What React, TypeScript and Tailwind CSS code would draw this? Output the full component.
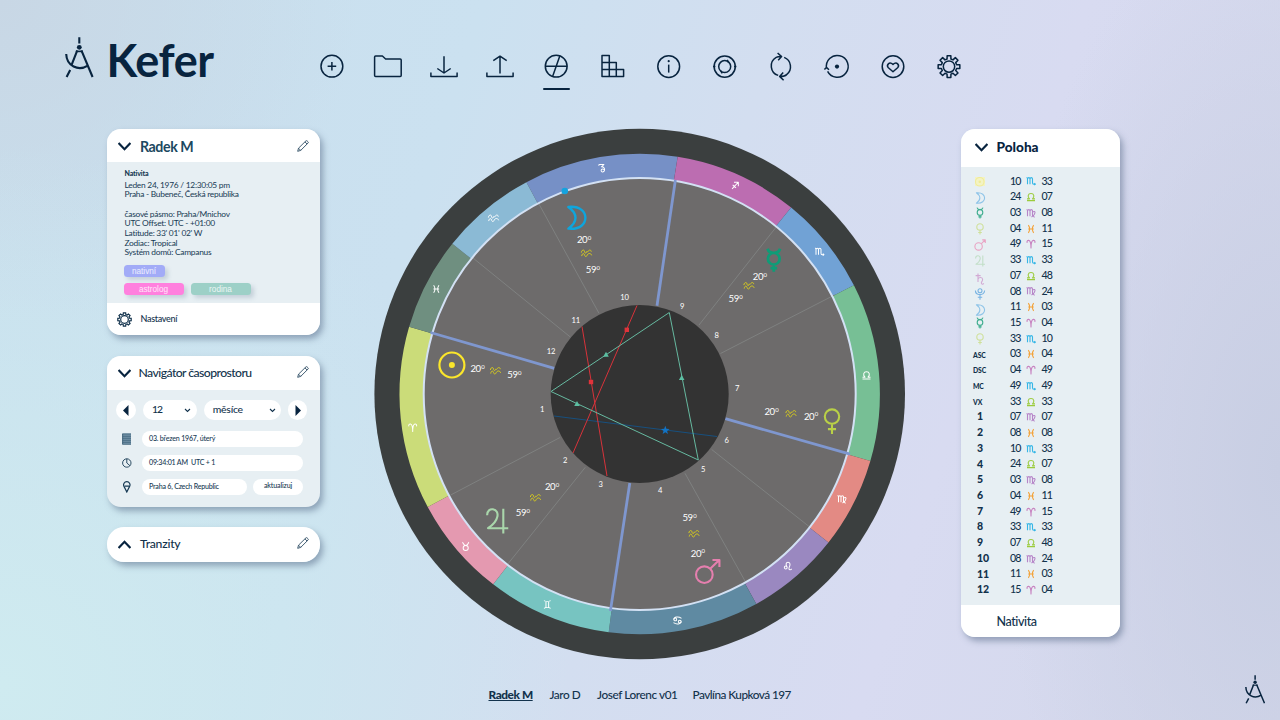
import type { ReactNode } from "react";

const CX = 639.7;
const CY = 394;

const wave = "M.4 5C.8 1.6 3.6 1.6 3.8 3.6S5.4 6.4 6 4.4 6.6 5.6 7.6 3.8 10.8 1.4 11.2 4";
const wave2 = "M.8 8.8C1.2 5.4 3.4 5.6 3.8 7.4S5.6 10.4 6.6 8 10.6 5 11.6 8";
const mStem = "M.6 2.2Q1.8 1.8 1.8 3.5V9.8M1.8 3.5Q2.2 2 3.4 2T4.8 3.5V9.8M4.8 3.5Q5.2 2 6.4 2T7.8 3.5";

const glyphs: Record<string, ReactNode> = {
  aries: <path d="M1.4 4.6C.8 2.6 2 1.5 3.3 1.7 5.2 2 6 5 6 10.8 6 5 6.8 2 8.7 1.7 10 1.5 11.2 2.6 10.6 4.6" />,
  taurus: <path d="M2 1C3.2 1.4 3.2 4.8 6 4.8S8.8 1.4 10 1M6 4.8A3 3 0 1 0 6 10.9 3 3 0 1 0 6 4.8" />,
  gemini: <path d="M2 1.4C4 2.6 8 2.6 10 1.4M2 10.6C4 9.4 8 9.4 10 10.6M4.4 2.2V9.8M7.6 2.2V9.8" />,
  cancer: (
    <>
      <circle cx="3.3" cy="4.7" r="1.7" />
      <circle cx="8.7" cy="7.3" r="1.7" />
      <path d="M1.6 4.7C1.8 1.6 7 .8 10.8 3.4M10.4 7.3C10.2 10.4 5 11.2 1.2 8.6" />
    </>
  ),
  leo: (
    <>
      <circle cx="3.3" cy="7.8" r="1.7" />
      <path d="M4.6 6.8C3.2 4.4 3.4 1.4 6 1.4S8.8 4.2 8 6.2 6.4 10.4 8.2 10.6 9.8 10 10.6 9.4" />
    </>
  ),
  virgo: <path d={mStem + "V8Q7.8 10 10.4 11M7.8 4.8Q10.8 3.2 10.8 5.8 10.6 8.6 6.6 10.8"} />,
  libra: <path d="M1.2 10.4H10.8M1.2 8.2H4.2C1.4 5.6 2.4 1.8 6 1.8S10.6 5.6 7.8 8.2H10.8" />,
  scorpio: <path d={mStem + "V8Q7.8 9.8 9.2 9.8H11.2M10 8.6L11.3 9.8 10 11"} />,
  sagittarius: <path d="M2.5 10.2L9.6 2.6M4.8 2.2H10V7M3.2 5.4L7.2 9" />,
  capricorn: <path d="M2.4 3.4Q2.4 1.4 4 1.8H8.6L5.6 4.6C8.8 4.6 9.8 6.8 9.2 9 8.4 11.4 5 11.2 5.2 8.8S8.4 6.6 9.2 8.6" />,
  aquarius: <path d={wave + wave2} />,
  pisces: <path d="M2.8 1.4Q6 6 2.8 10.6M9.2 1.4Q6 6 9.2 10.6M2.6 6H9.4" />,
  sun: (
    <>
      <circle cx="6" cy="6" r="5.4" />
      <circle cx="6" cy="6" r=".9" fill="currentColor" />
    </>
  ),
  moon: <path d="M2.4 .8C8.4 .2 10.6 3.4 10.6 6S8.4 11.8 2.4 11.2C7 8 7 4 2.4 .8Z" />,
  mercury: <path d="M3 .6Q3.6 2.6 6 2.6T9 .6M6 2.6A2.8 2.8 0 1 0 6 8.2 2.8 2.8 0 1 0 6 2.6M6 8.2V11.6M4.4 9.9H7.6" />,
  venus: <path d="M6 .7A3.2 3.2 0 1 0 6 7.1 3.2 3.2 0 1 0 6 .7M6 7.1V11.6M4.2 9.5H7.8" />,
  mars: <path d="M4.6 3.7A3.7 3.7 0 1 0 4.6 11.1 3.7 3.7 0 1 0 4.6 3.7M7.2 4.8L11.2 .9M8.2 .9H11.3V4" />,
  jupiter: <path d="M1.6 3.4C1.6 1.4 3 .6 4.2 .8 7.4 1.4 7 6 2 9.2H11M8.8 .6V11.6" />,
  saturn: <path d="M1.6 2.6H6.6M4 .6V9M4 6C5 4 8.6 4 8.6 6.4S7 8.6 7.4 10.2 9.2 11.2 9.8 10.4" />,
  pluto: (
    <>
      <circle cx="6" cy="2.7" r="2" />
      <path d="M1.4 2.6C1.4 8 10.6 8 10.6 2.6M6 6.6V11.8M3.8 9.2H8.2" />
    </>
  ),
};

function Glyph({ name, x, y, size, color, sw = 1 }: { name: string; x: number; y: number; size: number; color: string; sw?: number }) {
  const k = size / 12;
  return (
    <g
      transform={`translate(${x - size / 2} ${y - size / 2}) scale(${k})`}
      fill="none"
      stroke={color}
      color={color}
      strokeWidth={sw / k}
      strokeLinejoin="round"
    >
      {glyphs[name]}
    </g>
  );
}

function GlyphIcon({ name, color, size = 11, sw = 1 }: { name: string; color: string; size?: number; sw?: number }) {
  return (
    <svg width={size} height={size} viewBox={`0 0 ${size} ${size}`} className="shrink-0 overflow-visible">
      <Glyph name={name} x={size / 2} y={size / 2} size={size} color={color} sw={sw} />
    </svg>
  );
}

/* Sign boundaries on the outer edge of the zodiac ring, clockwise from Capricorn. */
const signs = [
  { name: "capricorn", color: "#7690c6", from: [526.7, 182.7], at: [601.8, 168] },
  { name: "sagittarius", color: "#bc6db1", from: [677.7, 156.7], at: [735, 185.3] },
  { name: "scorpio", color: "#71a2d5", from: [791, 207.7], at: [819.5, 251.5] },
  { name: "libra", color: "#77bf95", from: [854, 285.3], at: [866.5, 375.3] },
  { name: "virgo", color: "#e38a84", from: [870, 461], at: [842, 499] },
  { name: "leo", color: "#9a88c0", from: [827.7, 542], at: [788, 566] },
  { name: "cancer", color: "#5f8aa2", from: [756.3, 604], at: [677.5, 620.5] },
  { name: "gemini", color: "#77c4c1", from: [608.7, 632.3], at: [547.3, 604.5] },
  { name: "taurus", color: "#e499b0", from: [494, 583.3], at: [465.7, 546.5] },
  { name: "aries", color: "#cbdc79", from: [428.3, 506.7], at: [412.7, 427.5] },
  { name: "pisces", color: "#6f8f80", from: [409.3, 326.7], at: [436.3, 289] },
  { name: "aquarius", color: "#8bbad5", from: [452.7, 244], at: [493.5, 218.5] },
];

function sector(a: number[], b: number[]) {
  const t0 = Math.atan2(a[1] - CY, a[0] - CX);
  const t1 = Math.atan2(b[1] - CY, b[0] - CX);
  const p = (r: number, t: number) => `${(CX + r * Math.cos(t)).toFixed(2)} ${(CY + r * Math.sin(t)).toFixed(2)}`;
  return `M${p(240.2, t0)}A240.2 240.2 0 0 1 ${p(240.2, t1)}L${p(216, t1)}A216 216 0 0 0 ${p(216, t0)}Z`;
}

const cusps = [
  [537.7, 201.7, 599, 313.3], [473, 258, 570.3, 337], [450.7, 495, 560, 437.5], [507, 565, 585.3, 467.3],
  [746.3, 583.3, 685, 473.3], [809.3, 526.7, 711.7, 449.5], [834.5, 295, 720.5, 353.5], [777, 226, 699, 325],
];
const axes = [
  [430.5, 332.5, 554.3, 368.3], [675.4, 180, 657, 305.8], [850, 454.2, 725.3, 418.7], [610.4, 611, 629.8, 483],
];
const houses: [string, number, number][] = [
  ["10", 624.5, 300], ["9", 682, 309], ["8", 716.7, 338], ["7", 737, 391], ["6", 726.5, 443], ["5", 703, 472],
  ["4", 660, 493], ["3", 600.5, 487], ["2", 565, 463], ["1", 542, 412], ["12", 551, 354], ["11", 575.7, 323],
];
const degrees: [string, number, number][] = [
  ["20", 577, 243], ["59", 585.8, 273], ["20", 470.5, 372], ["59", 507.3, 378], ["20", 752.8, 279.7], ["59", 728.6, 302],
  ["20", 764.5, 415], ["20", 804, 419.5], ["20", 545, 490], ["59", 515.8, 516], ["59", 682.5, 521], ["20", 690.8, 556.5],
];
const waves = [[586.5, 253.5], [495.5, 371], [749, 286], [791, 414], [535.5, 498], [694, 534]];

function Wheel() {
  return (
    <svg width="532" height="532" viewBox="374 128 532 532" className="shrink-0">
      <circle cx={CX} cy={CY} r="265.3" fill="#3b3f3f" />
      <circle cx={CX} cy={CY} r="217" fill="#6d6b6b" />
      {signs.map((s, i) => (
        <path key={s.name} d={sector(s.from, signs[(i + 1) % 12].from)} fill={s.color} />
      ))}
      {cusps.map((c, i) => (
        <line key={i} x1={c[0]} y1={c[1]} x2={c[2]} y2={c[3]} stroke="#7f8180" strokeWidth="1" />
      ))}
      <circle cx={CX} cy={CY} r="216" fill="none" stroke="#d3e1f4" strokeWidth="2" />
      {axes.map((c, i) => (
        <line key={i} x1={c[0]} y1={c[1]} x2={c[2]} y2={c[3]} stroke="#7f97cf" strokeWidth="2.8" />
      ))}
      <circle cx={CX} cy={CY} r="89" fill="#333333" />
      <g fill="none" strokeWidth="1">
        <path d="M554 416L717 436.5" stroke="#17507f" />
        <path d="M582 326.5L607 476M637 305.5L573 453" stroke="#d8323a" />
        <path d="M551 391.5L669.3 312.5L698.3 460Z" stroke="#66b9a0" />
      </g>
      <g fill="#e0333b">
        <rect x="588.8" y="379.8" width="4.4" height="4.4" />
        <rect x="624.6" y="327.6" width="4.4" height="4.4" />
      </g>
      <path d="M606 351.8l2.8 5h-5.6zM681.7 375l2.8 5h-5.6zM577 401l2.8 5h-5.6z" fill="#5cbfa2" />
      <path d="M665.3 425.8l1.1 3 3.2.1-2.5 2 .9 3.1-2.7-1.8-2.7 1.8.9-3.1-2.5-2 3.2-.1z" fill="#1273c4" />
      <circle cx="564.8" cy="191" r="3.3" fill="#14a3df" />
      {signs.map((s) => (
        <Glyph key={s.name} name={s.name} x={s.at[0]} y={s.at[1]} size={s.name === "aquarius" ? 11 : 10} color="#fff" sw={1} />
      ))}
      {waves.map((w, i) => (
        <Glyph key={i} name="aquarius" x={w[0]} y={w[1]} size={11} color="#d8cc1e" sw={1} />
      ))}
      <Glyph name="moon" x={575.8} y={217.8} size={25} color="#0fa5dc" sw={2.4} />
      <Glyph name="mercury" x={773.8} y={260} size={25} color="#0f9c77" sw={2.8} />
      <Glyph name="venus" x={832} y={421.3} size={27} color="#b9d047" sw={2.1} />
      <Glyph name="mars" x={707.5} y={571.5} size={27} color="#e57fae" sw={2.1} />
      <Glyph name="jupiter" x={497} y={521} size={27} color="#a9d6ab" sw={2.1} />
      <circle cx="451.9" cy="365" r="12.5" fill="none" stroke="#fbe62b" strokeWidth="2.2" />
      <circle cx="451.9" cy="365" r="3" fill="#fbe62b" />
      <g fill="#fff" fontFamily="Lato, sans-serif" fontSize="7.6" fontWeight="400" textAnchor="middle" letterSpacing="-.2">
        {houses.map(([t, x, y]) => (
          <text key={t} x={x} y={y}>{t}</text>
        ))}
      </g>
      <g fill="#fff" fontFamily="Lato, sans-serif" fontSize="9.6" fontWeight="400" letterSpacing="-.45">
        {degrees.map(([t, x, y], i) => (
          <text key={i} x={x} y={y}>
            {t}
            <tspan fontSize="6" dx=".5" dy="-3.2">0</tspan>
          </text>
        ))}
      </g>
    </svg>
  );
}

function Compass({ w, h }: { w: number; h: number }) {
  return (
    <svg width={w} height={h} viewBox="0 0 29 41" fill="none" stroke="#08243f" strokeWidth="2.1">
      <path d="M14.3 .3V6.6M12.3 13.4L6.8 27.4M5.2 33L1.6 40M16.4 13.4L27.6 40M1.2 17C1.6 29 13.4 34.6 22.8 28.6" />
      <circle cx="14.3" cy="10.3" r="2.4" fill="#08243f" stroke="none" />
      <path d="M10.8 14.4H17.8" strokeWidth="1.6" />
    </svg>
  );
}

function gearPath(cx: number, cy: number, ro: number, ri: number) {
  const pts: string[] = [];
  for (let i = 0; i < 8; i++) {
    const a = (i * Math.PI) / 4 - Math.PI / 2;
    [[-0.25, ri], [-0.17, ro], [0.17, ro], [0.25, ri]].forEach(([d, r]) => {
      pts.push(`${(cx + r * Math.cos(a + d)).toFixed(2)} ${(cy + r * Math.sin(a + d)).toFixed(2)}`);
    });
  }
  return `M${pts.join("L")}Z`;
}

/* Toolbar drawings share a 28 by 28 box. */
const toolIcons: { id: string; art: ReactNode }[] = [
  { id: "add", art: <><circle cx="13.9" cy="13.2" r="10.9" /><path d="M13.9 8.9V17.5M9.6 13.2H18.2" /></> },
  { id: "open", art: <path d="M.6 22.6V4Q.6 3 1.6 3H8.4L11.6 6H26.2Q27.2 6 27.2 7V22.6Q27.2 23.6 26.2 23.6H1.6Q.6 23.6 .6 22.6Z" /> },
  { id: "download", art: <path d="M14 3.2V20M7.3 15.5L14 20L20.7 15.5M.9 19.6V23.6H27.1V19.6" /> },
  { id: "upload", art: <path d="M14 20.4V3.2M7.3 7.7L14 3.2L20.7 7.7M.9 19.6V23.6H27.1V19.6" /> },
  { id: "chart", art: <><circle cx="14.2" cy="13.2" r="10.9" /><path d="M3.2 13.2H25.2M17.8 3L10.6 23.4" /></> },
  { id: "table", art: <path d="M3 2.6H10.3V23.6H3ZM3 9.6H17.3V23.6M3 16.6H24.6V23.6H3" /> },
  { id: "info", art: <><circle cx="13.7" cy="13.6" r="10.9" /><path d="M13.7 11.6V19.6" /><circle cx="13.7" cy="8.2" r="1.1" fill="#08243f" stroke="none" /></> },
  { id: "transit", art: <><circle cx="13.7" cy="13.6" r="10.6" /><circle cx="13.7" cy="13.6" r="6" /><path d="M2 13.6H4.4M23 13.6H25.4M16.2 6.9L17.6 9.4M11.2 20.3L9.8 17.8" /></> },
  { id: "cycle", art: <path d="M11.2 22.4A9.9 9.9 0 0 1 9.2 4.4Q10.6 3.6 14.2 3.6M10.6 0L14.6 3.6 11.2 7.2M17.2 4.4A10 10 0 0 1 19.6 21.6Q17.8 23.4 13.2 23.4M16.2 19.6L12.6 23.4 16.6 27.2" /> },
  { id: "return", art: <><path d="M3.6 15.6A10.9 10.9 0 1 1 4.6 18.4M1.4 16.6L3.4 14.4 6 16.8" /><circle cx="14" cy="13.6" r="2.1" fill="#08243f" stroke="none" /></> },
  { id: "partner", art: <><circle cx="14" cy="13.6" r="10.8" /><path d="M14 18.8L9.4 14.8C7 12.2 10.2 8 14 11.4 17.8 8 21 12.2 18.6 14.8Z" /></> },
  { id: "settings", art: <><path d={gearPath(14, 13.6, 11, 7.8)} /><circle cx="14" cy="13.6" r="5.7" /></> },
];

function Chevron({ up = false }: { up?: boolean }) {
  return (
    <svg width="13" height="9" viewBox="0 0 13 9" fill="none" stroke="#08243f" strokeWidth="2.1" className="shrink-0">
      <path d={up ? "M.6 8L6.5 1.8L12.4 8" : "M.6 1L6.5 7.2L12.4 1"} />
    </svg>
  );
}

function SmallChevron() {
  return (
    <svg width="7" height="5" viewBox="0 0 7 5" fill="none" stroke="#12324c" strokeWidth="1.1">
      <path d="M1 1L3.5 3.4L6 1" />
    </svg>
  );
}

function Pencil() {
  return (
    <svg width="12" height="12" viewBox="0 0 12 12" fill="none" stroke="#2c4c63" strokeWidth=".9" strokeLinejoin="round">
      <path d="M.7 11.3L1.5 8.2L9 .8Q9.6 .4 10.2 1L11.1 1.9Q11.6 2.5 11 3.1L3.7 10.4ZM8 1.9L10 4M1.5 8.2L3.7 10.4" />
    </svg>
  );
}

function CardHeader({ title, className, up, edit = true }: { title: ReactNode; className: string; up?: boolean; edit?: boolean }) {
  return (
    <div className={"flex items-center bg-white pr-[11px] " + className}>
      <Chevron up={up} />
      {title}
      {edit && <span className="ml-auto pb-[2px]"><Pencil /></span>}
    </div>
  );
}

const cardShadow = "shadow-[3px_4px_6px_rgba(80,100,130,0.5)]";

function ProfileCard() {
  return (
    <section className={"mt-[1px] h-[206px] overflow-hidden rounded-[14px] bg-[#e7eff3] " + cardShadow}>
      <CardHeader className="h-[33px] pl-[11.5px] pt-[2px]" title={<h2 className="ml-[9px] text-[14.2px] font-bold tracking-[-0.42px] text-[#1b4860]">Radek M</h2>} />
      <div className="h-[141px] pl-[18px] pt-[6.8px] text-[8.4px] leading-[9.65px] tracking-[-0.26px] text-[#173a54]">
        <div className="h-[12px] text-[7px] font-black tracking-[-0.15px]">Nativita</div>
        <p>Leden 24, 1976 / 12:30:05 pm</p>
        <p>Praha - Bubeneč, Česká republika</p>
        <p className="mt-[9.6px]">časové pásmo: Praha/Mnichov</p>
        <p>UTC Offset: UTC - +01:00</p>
        <p>Latitude: 33' 01' 02' W</p>
        <p>Zodiac: Tropical</p>
        <p>Systém domů: Campanus</p>
        <div className="mt-[7.4px] flex w-[140px] flex-wrap gap-x-[7px] gap-y-[6px] font-['Liberation_Sans',sans-serif] text-[8.2px] leading-[13px] tracking-normal text-white/80">
          <span className="-ml-px mr-[60px] h-[12px] w-[41px] rounded-[3.5px] bg-[#a2abf7] text-center shadow-[3px_3px_4px_rgba(120,140,160,0.3)]">nativní</span>
          <span className="-ml-px h-[12px] w-[60px] rounded-[3.5px] bg-[#ff80de] text-center shadow-[3px_3px_4px_rgba(120,140,160,0.3)]">astrolog</span>
          <span className="h-[12px] w-[60px] rounded-[3.5px] bg-[#9dd0c7] text-center shadow-[3px_3px_4px_rgba(120,140,160,0.3)]">rodina</span>
        </div>
      </div>
      <div className="flex h-[32px] items-center bg-white pl-[10px] text-[9px] font-medium tracking-[-0.55px] text-[#12324c]">
        <svg width="15" height="15" viewBox="0 0 15 15" fill="none" stroke="#12324c" strokeWidth="1.2">
          <path d={gearPath(7.5, 7.5, 6.8, 5.2)} />
          <circle cx="7.5" cy="7.5" r="3.8" />
        </svg>
        <span className="ml-[9px] tracking-[-0.3px]">Nastavení</span>
      </div>
    </section>
  );
}

function NavigatorCard() {
  const field = "flex h-[16px] items-center rounded-full bg-white pl-[7.5px] pt-px text-[7.1px] font-medium tracking-[-0.22px] text-[#173a54]";
  return (
    <section className={"mt-[21px] h-[151px] overflow-hidden rounded-[14px] bg-[#e7eff3] " + cardShadow}>
      <CardHeader className="h-[34px] pl-[11.5px]" title={<h2 className="ml-[7.5px] text-[12.2px] font-medium tracking-[-0.56px] text-[#12324c]">Navigátor časoprostoru</h2>} />
      <div className="flex flex-col gap-[8px] pl-[9.5px] pr-[12px] pt-[10px]">
        <div className="flex gap-[7px] text-[10.4px] font-medium tracking-[-0.25px] text-[#12324c]">
          <button className="flex size-[20px] items-center justify-center rounded-full bg-white">
            <svg width="6" height="11" viewBox="0 0 6 11" fill="#08243f"><path d="M5.5 0V11L0 5.5Z" /></svg>
          </button>
          <div className="flex h-[20px] w-[54px] items-center justify-between rounded-full bg-white pl-[9px] pr-[6px]"><span className="tracking-[-0.9px]">12</span><SmallChevron /></div>
          <div className="flex h-[20px] w-[77px] items-center justify-between rounded-full bg-white pl-[9px] pr-[5px]">měsíce<SmallChevron /></div>
          <button className="flex size-[20px] items-center justify-center rounded-full bg-white">
            <svg width="6" height="11" viewBox="0 0 6 11" fill="#08243f"><path d="M.5 0V11L6 5.5Z" /></svg>
          </button>
        </div>
        <div className="mt-[2.5px] flex items-center gap-[7.5px]">
          <svg width="18" height="12" viewBox="0 0 18 12"><rect x="6.5" y=".5" width="8.5" height="11" fill="#7c9bb0" /><path d="M6.2 1H15M6.2 11.2H15M6.5 3.2H15M6.5 5.2H15M6.5 7.2H15M6.5 9.2H15M6.6 1V11" stroke="#31566f" strokeWidth=".8" /></svg>
          <div className={field + " w-[161.5px]"}>03. březen 1967, úterý</div>
        </div>
        <div className="flex items-center gap-[7.5px]">
          <svg width="18" height="10" viewBox="0 0 18 10" fill="none" stroke="#173a54" strokeWidth=".9"><circle cx="10.8" cy="5" r="4.2" /><path d="M10.8 .8V5L13.9 7.6" /></svg>
          <div className={field + " w-[161.5px] whitespace-pre"}>{"09:34:01 AM  UTC + 1"}</div>
        </div>
        <div className="flex items-center gap-[7.5px]">
          <svg width="18" height="13" viewBox="0 0 18 13" fill="none" stroke="#173a54" strokeWidth="1.2"><path d="M10.8 12L8 6.4A3.2 3.2 0 1 1 13.6 6.4Z" /><path d="M8.6 6.2H13" /></svg>
          <div className={field + " w-[105px]"}>Praha 6, Czech Republic</div>
          <button className="-ml-[1px] flex h-[16px] w-[50px] items-center justify-center rounded-full bg-white text-[7.1px] font-medium tracking-[-0.15px] text-[#173a54]">aktualizuj</button>
        </div>
      </div>
    </section>
  );
}

const colors: Record<string, string> = {
  scorpio: "#35b6e6", libra: "#9bcb3c", virgo: "#b685c8", pisces: "#f3a33c", aries: "#c782c0",
};

const rows: [string, string, string, string][] = [
  ["sun", "10", "scorpio", "33"], ["moon", "24", "libra", "07"], ["mercury", "03", "virgo", "08"],
  ["venus", "04", "pisces", "11"], ["mars", "49", "aries", "15"], ["jupiter", "33", "scorpio", "33"],
  ["saturn", "07", "libra", "48"], ["pluto", "08", "virgo", "24"], ["moon", "11", "pisces", "03"],
  ["mercury", "15", "aries", "04"], ["venus", "33", "scorpio", "10"], ["ASC", "03", "pisces", "04"],
  ["DSC", "04", "aries", "49"], ["MC", "49", "scorpio", "49"], ["VX", "33", "libra", "33"],
  ["1", "07", "virgo", "07"], ["2", "08", "pisces", "08"], ["3", "10", "scorpio", "33"],
  ["4", "24", "libra", "07"], ["5", "03", "virgo", "08"], ["6", "04", "pisces", "11"],
  ["7", "49", "aries", "15"], ["8", "33", "scorpio", "33"], ["9", "07", "libra", "48"],
  ["10", "08", "virgo", "24"], ["11", "11", "pisces", "03"], ["12", "15", "aries", "04"],
];

const bodyColors: Record<string, string> = {
  sun: "#f0eb98", moon: "#8ec4e8", mercury: "#3fae8f", venus: "#cfe09a", mars: "#e9a3c3",
  jupiter: "#c2dfc8", saturn: "#d2a9d4", pluto: "#78b3e2",
};

function RowLabel({ id, low }: { id: string; low: boolean }) {
  if (bodyColors[id]) {
    const pad = id === "sun" ? "" : low ? "pt-[6px]" : "pt-[1px]";
    return (
      <span className={"flex w-[37px] " + (id === "sun" ? "pl-[2px]" : "pl-[1px]")}>
        <span className={id === "sun" ? "bg-[#f3f3c4]" : pad}>
          <GlyphIcon name={id} color={bodyColors[id]} size={id === "sun" ? 9.5 : 12} sw={1.1} />
        </span>
      </span>
    );
  }
  const short = /^\d/.test(id);
  return <span className={short ? "w-[37px] pl-[4px] text-[10.5px] font-black tracking-[-0.2px]" : "w-[37px] text-[6.8px] font-black tracking-[-0.1px] pt-[1px]"}>{id}</span>;
}

function PositionCard() {
  return (
    <section className={"mt-[1px] flex h-[508px] w-[159px] flex-col overflow-hidden rounded-[14px] bg-[#e7eff3] " + cardShadow}>
      <CardHeader className="h-[38px] pb-[2px] pl-[13.5px]" edit={false} title={<h2 className="ml-[9px] text-[13.6px] font-black text-[#08243f]">Poloha</h2>} />
      <div className="flex-1 pl-[12px] pt-[6.6px] text-[10.6px] font-medium tracking-[-0.9px] text-[#12324c]">
        {rows.map(([id, a, sign, b], i) => (
          <div key={i} className="flex h-[15.73px] items-center">
            <RowLabel id={id} low={i > 5 && i < 9} />
            <span className="w-[16px]">{a}</span>
            <GlyphIcon name={sign} color={colors[sign]} size={10} sw={1.1} />
            <span className="ml-[5.5px]">{b}</span>
          </div>
        ))}
      </div>
      <div className="flex h-[32px] items-center bg-white pl-[35.5px] pt-[2px] text-[12.5px] font-medium tracking-[-0.4px] text-[#12324c]">Nativita</div>
    </section>
  );
}

export default function App() {
  return (
    <div className="flex h-[720px] w-[1280px] flex-col overflow-hidden bg-[radial-gradient(ellipse_45%_75%_at_0%_95%,#cfebf0_0%,#cfebf000_100%),radial-gradient(ellipse_28%_45%_at_0%_0%,#c8d7e5_0%,#c8d7e500_100%),radial-gradient(ellipse_22%_80%_at_100%_65%,#c8cee3_0%,#c8cee300_100%),linear-gradient(108deg,#c8dfed_0%,#cbe1f0_32%,#d3def0_52%,#d8dbf1_72%,#d3d7ea_100%)] font-[Lato,'Noto_Sans',sans-serif] font-normal">
      <header className="flex h-[128px]">
        <div className="flex w-[304px] pl-[65px] pt-[37px]">
          <Compass w={29} h={41} />
          <h1 className="-mt-[2px] ml-[12.5px] text-[45px] font-bold leading-[50px] tracking-[-0.4px] text-[#08243f]">Kefer</h1>
        </div>
        <nav className="flex pt-[53px]">
          {toolIcons.map((t) => (
            <button key={t.id} aria-label={t.id} className="flex w-[56.1px] flex-col items-center">
              <svg width="28" height="28" viewBox="0 0 28 28" fill="none" stroke="#08243f" strokeWidth="1.5" strokeLinejoin="round" className="overflow-visible">
                {t.art}
              </svg>
              {t.id === "chart" && <span className="mt-[6.5px] h-[2px] w-[27px] rounded bg-[#08243f]" />}
            </button>
          ))}
        </nav>
      </header>
      <main className="flex h-[532px] pl-[106.5px]">
        <div className="mr-[54.5px] w-[213px] shrink-0">
          <ProfileCard />
          <NavigatorCard />
          <section className={"mt-[20px] overflow-hidden rounded-[17px] " + cardShadow}>
            <CardHeader className="h-[34.5px] pl-[11.5px]" up title={<h2 className="ml-[9px] text-[12.2px] font-medium tracking-[-0.25px] text-[#12324c]">Tranzity</h2>} />
          </section>
        </div>
        <Wheel />
        <div className="ml-[55px]">
          <PositionCard />
        </div>
      </main>
      <footer className="flex h-[60px] pl-[488.5px] pt-[25.5px] text-[11.8px] font-medium leading-[17px] tracking-[-0.53px] text-[#12324c]">
        <span className="w-[61px]"><a className="font-black tracking-[-0.42px] underline">Radek M</a></span>
        <span className="w-[47.5px] tracking-[-0.42px]">Jaro D</span>
        <span className="w-[95.5px] tracking-[-0.42px]">Josef Lorenc v01</span>
        <span>Pavlína Kupková 197</span>
        <span className="-mt-[11px] ml-auto mr-[15px]"><Compass w={20.5} h={29} /></span>
      </footer>
    </div>
  );
}
